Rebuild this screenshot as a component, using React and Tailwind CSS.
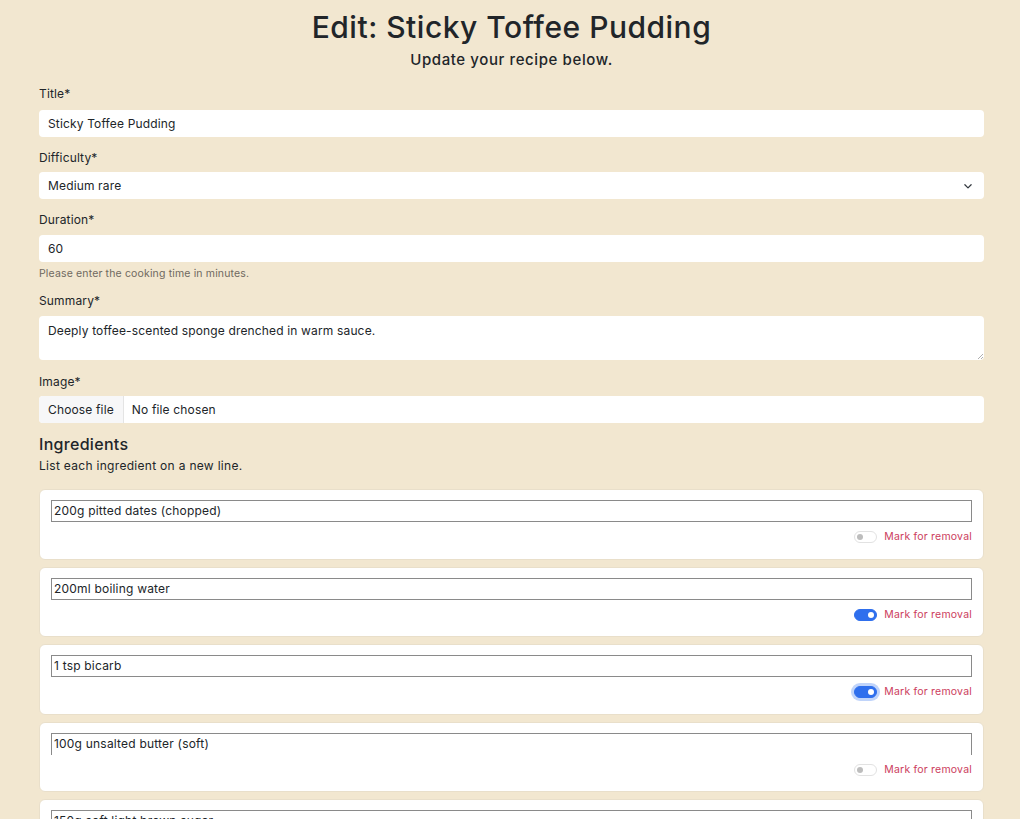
import React from "react";

const ingredients = [
  { text: "200g pitted dates (chopped)", on: false, focus: false },
  { text: "200ml boiling water", on: true, focus: false },
  { text: "1 tsp bicarb", on: true, focus: true },
  { text: "100g unsalted butter (soft)", on: false, focus: false, open: true },
  { text: "150g soft light brown sugar", on: false, focus: false },
];

function Toggle({ on, focus }) {
  if (on) {
    return (
      <span
        className={
          "relative inline-block w-[23px] h-[12px] rounded-full bg-[#2f6fed] border border-[#2f6fed] " +
          (focus ? "shadow-[0_0_0_3px_rgba(47,111,237,0.3)]" : "")
        }
      >
        <span className="absolute right-[2px] top-[2px] w-[6px] h-[6px] rounded-full bg-white" />
      </span>
    );
  }
  return (
    <span className="relative inline-block w-[23px] h-[12px] rounded-full bg-white border border-[#e2e2e2]">
      <span className="absolute left-[2px] top-[2px] w-[6px] h-[6px] rounded-full bg-[#bdbdbd]" />
    </span>
  );
}

export default function App() {
  return (
    <div
      className="min-h-screen bg-[#f2e7d0] text-[#212529]"
      style={{ fontFamily: "Inter, 'DejaVu Sans', sans-serif" }}
    >
      <div className="ml-[39px] w-[945px] pt-[10px]">
        <h1 className="text-center text-[30px] leading-[34px] font-medium tracking-[0.5px]">
          Edit: Sticky Toffee Pudding
        </h1>
        <p className="text-center text-[15px] leading-[20px] font-medium mt-[6px] tracking-[0.6px]">
          Update your recipe below.
        </p>

        <div className="mt-[16px] flex flex-col tracking-[0.15px]">
          <label className="text-[12px] leading-[16px]">Title*</label>
          <div className="mt-[8px] h-[27px] bg-white rounded-[4px] px-[9px] flex items-center text-[12px]">
            Sticky Toffee Pudding
          </div>

          <label className="mt-[13px] text-[12px] leading-[16px]">Difficulty*</label>
          <div className="mt-[6px] h-[27px] bg-white rounded-[4px] px-[9px] flex items-center justify-between text-[12px]">
            <span>Medium rare</span>
            <svg width="10" height="10" viewBox="0 0 16 16" className="mr-[2px]">
              <path d="M3 6l5 5 5-5" fill="none" stroke="#343a40" strokeWidth="2" strokeLinecap="round" strokeLinejoin="round" />
            </svg>
          </div>

          <label className="mt-[13px] text-[12px] leading-[16px]">Duration*</label>
          <div className="mt-[7px] h-[27px] bg-white rounded-[4px] px-[9px] flex items-center text-[12px]">
            60
          </div>
          <p className="mt-[6px] text-[10.5px] leading-[12px] text-[#6f695f]">
            Please enter the cooking time in minutes.
          </p>

          <label className="mt-[13px] text-[12px] leading-[16px]">Summary*</label>
          <div className="mt-[7px] h-[44px] bg-white rounded-[4px] px-[9px] pt-[6px] text-[12px] relative">
            Deeply toffee-scented sponge drenched in warm sauce.
            <svg width="6" height="6" viewBox="0 0 6 6" className="absolute right-[1px] bottom-[1px]">
              <path d="M6 1L1 6M6 4L4 6" stroke="#9a9a9a" strokeWidth="0.8" />
            </svg>
          </div>

          <label className="mt-[14px] text-[12px] leading-[16px]">Image*</label>
          <div className="mt-[6px] h-[27px] bg-white rounded-[4px] flex items-center text-[12px] overflow-hidden">
            <span className="h-full px-[9px] flex items-center bg-[#f7f7f8] border-r border-[#e4e4e4]">
              Choose file
            </span>
            <span className="px-[8px]">No file chosen</span>
          </div>

          <h2 className="mt-[11px] text-[16px] leading-[20px] font-medium tracking-[0.3px]">Ingredients</h2>
          <p className="mt-[4px] text-[12px] leading-[16px] tracking-[0.3px]">List each ingredient on a new line.</p>

          <div className="mt-[15px] flex flex-col gap-[7px]">
            {ingredients.map((ing, i) => (
              <div
                key={i}
                className="bg-white rounded-[6px] border border-[#e9dfca] h-[70.5px] px-[11px] pt-[10px]"
              >
                <div
                  className={
                    "h-[22px] border border-[#8a8a8a] px-[2px] flex items-center text-[12px] tracking-[0.2px] " +
                    (ing.open ? "border-b-0" : "")
                  }
                >
                  {ing.text}
                </div>
                <div className="mt-[8px] flex items-center justify-end gap-[7px]">
                  <Toggle on={ing.on} focus={ing.focus} />
                  <span className="text-[10.5px] leading-[14px] text-[#cc3d5d] tracking-[0.2px]">Mark for removal</span>
                </div>
              </div>
            ))}
          </div>
        </div>
      </div>
    </div>
  );
}
